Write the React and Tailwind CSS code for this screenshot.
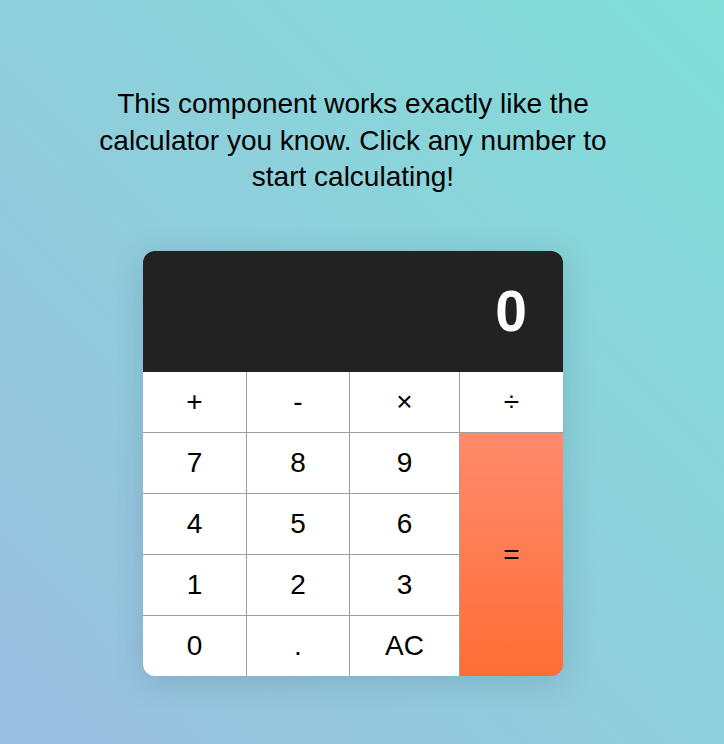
import React, { useState } from 'react';

const KEYS = ['+', '-', '×', '÷', '7', '8', '9', '=', '4', '5', '6', '1', '2', '3', '0', '.', 'AC'];

export default function App() {
    const [display, setDisplay] = useState('0');

    const press = (k) => {
        if (k === 'AC') return setDisplay('0');
        if (k === '=') {
            try {
                const expr = display.replace(/×/g, '*').replace(/÷/g, '/');
                // eslint-disable-next-line no-new-func
                const v = Function('return (' + expr + ')')();
                setDisplay(String(Number.isFinite(v) ? +v.toFixed(8) : 0));
            } catch {
                setDisplay('0');
            }
            return;
        }
        setDisplay((d) => (d === '0' && /[0-9]/.test(k) ? k : d + k));
    };

    return (
        <div
            className="min-h-screen w-full bg-linear-to-tr from-[#9bbfe0] to-[#7fded7]"
            style={{ fontFamily: '"Liberation Sans", Arial, sans-serif' }}
        >
            <div className="w-[706px] flex flex-col items-center pt-[86px] pb-10">
                <p className="w-[530px] text-center text-[28px] leading-[36.5px] text-black">
                    This component works exactly like the calculator you know. Click any number to start calculating!
                </p>

                <div className="mt-[55.5px] w-[420px] rounded-xl overflow-hidden shadow-[0_6px_32px_rgba(30,60,90,0.18)]">
                    <div className="h-[121px] bg-[#222222] flex items-center justify-end pr-9">
                        <span className="text-white font-bold text-[57px] leading-[1.2] whitespace-nowrap">{display}</span>
                    </div>
                    <div className="grid grid-cols-[103px_102px_109px_103px] auto-rows-[60px] gap-px bg-[#9e9e9e]">
                        {KEYS.map((k) => (
                            <button
                                key={k}
                                onClick={() => press(k)}
                                className={
                                    k === '='
                                        ? 'row-span-4 flex items-center justify-center text-[28px] text-black bg-linear-to-b from-[#ff8a6b] to-[#ff6d33]'
                                        : 'flex items-center justify-center text-[28px] text-black bg-white'
                                }
                            >
                                {k}
                            </button>
                        ))}
                    </div>
                </div>
            </div>
        </div>
    );
}
